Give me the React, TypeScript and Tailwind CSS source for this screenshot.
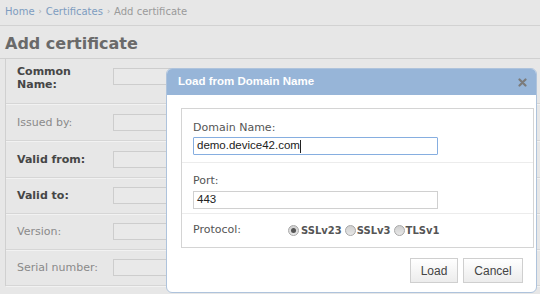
import React from "react";

const Radio = ({ checked }: { checked?: boolean }) => (
  <span className="inline-flex w-[11px] h-[11px] rounded-full border border-[#a8a8a8] bg-gradient-to-b from-[#cfcfcf] to-[#e8e8e8] items-center justify-center shrink-0">
    {checked && <span className="w-[5px] h-[5px] rounded-full bg-[#555]" />}
  </span>
);

const Row = ({
  label,
  bold,
  h,
  top,
}: {
  label: React.ReactNode;
  bold?: boolean;
  h: string;
  top?: boolean;
}) => (
  <div
    className={`flex ${h} border-b border-[#d6d6d6] shadow-[0_1px_0_#f2f2f2] ${top ? "items-start pt-[6px]" : "items-center"}`}
  >
    <div
      className={`w-[107px] pl-[11px] leading-[13px] ${bold ? "font-bold text-[#464646]" : "text-[#8a8a8a]"}`}
    >
      {label}
    </div>
    <div className={`w-[200px] h-[17px] border border-[#cdcdcd] bg-[#e9e9e9] ${top ? "mt-[3px]" : ""}`} />
  </div>
);

const arial = { fontFamily: '"Liberation Sans", Arial, sans-serif' };

export default function App() {
  return (
    <div
      className="relative w-[540px] h-[294px] overflow-hidden bg-[#e7e7e7] text-[11px]"
      style={{ fontFamily: '"DejaVu Sans", Verdana, sans-serif' }}
    >
      <div className="h-[26px] flex items-center px-[5px] border-b border-[#d2d2d2] text-[10px] pb-[2px]">
        <span className="text-[#7d9cc0]">Home</span>
        <span className="text-[#aaa] mx-[4px] text-[8px]">›</span>
        <span className="text-[#7d9cc0]">Certificates</span>
        <span className="text-[#aaa] mx-[4px] text-[8px]">›</span>
        <span className="text-[#9a9a9a]">Add certificate</span>
      </div>
      <div className="h-[33px] flex items-center px-[5px] pt-[3px] border-b border-[#d0d0d0] text-[16px] font-bold text-[#6a6a6a]">
        Add certificate
      </div>
      <div className="ml-[5px] border-l border-[#d0d0d0]">
        <Row label={<>Common<br />Name:</>} bold h="h-[45px]" top />
        <Row label="Issued by:" h="h-[37px]" />
        <Row label="Valid from:" bold h="h-[37px]" />
        <Row label="Valid to:" bold h="h-[36px]" />
        <Row label="Version:" h="h-[36px]" />
        <Row label="Serial number:" h="h-[36px]" />
      </div>

      <div className="absolute left-[166px] top-[68px] w-[371px] h-[225px] rounded-[6px] bg-white border border-[#aec3dc] flex flex-col overflow-hidden">
        <div className="h-[26px] shrink-0 bg-[#97b5d8] flex items-center justify-between pl-[11px] pr-[9px]">
          <span className="text-white font-bold text-[11.5px]" style={arial}>
            Load from Domain Name
          </span>
          <svg width="9" height="9" viewBox="0 0 9 9">
            <path d="M1.5 1.5 L7.5 7.5 M7.5 1.5 L1.5 7.5" stroke="#7b7b7b" strokeWidth="2.2" strokeLinecap="round" />
          </svg>
        </div>
        <div className="mt-[13px] ml-[14px] mr-[2px] border border-[#d4d4d4] flex flex-col text-[#555]">
          <div className="h-[54px] border-b border-[#ececec] pl-[11px] pt-[12px] flex flex-col">
            <span className="leading-[13px]">Domain Name:</span>
            <div
              className="mt-[3px] w-[245px] h-[18px] border border-[#86aee0] flex items-center pl-[3px] text-[#222] text-[11.5px] rounded-[1px]"
              style={arial}
            >
              demo.device42.com<span className="w-px h-[13px] bg-[#222]" />
            </div>
          </div>
          <div className="h-[51px] border-b border-[#ececec] pl-[11px] pt-[11px] flex flex-col">
            <span className="leading-[13px]">Port:</span>
            <div
              className="mt-[4px] w-[245px] h-[18px] border border-[#d0d0d0] flex items-center pl-[3px] text-[#222] text-[11.5px]"
              style={arial}
            >
              443
            </div>
          </div>
          <div className="h-[33px] pl-[11px] flex items-center">
            <span className="w-[95px]">Protocol:</span>
            <div className="flex items-center text-[#555] font-bold text-[10px]">
              <Radio checked />
              <span className="ml-[2px] mr-[3px]">SSLv23</span>
              <Radio />
              <span className="ml-[1px] mr-[3px]">SSLv3</span>
              <Radio />
              <span className="ml-[1px]">TLSv1</span>
            </div>
          </div>
        </div>
        <div className="flex justify-end gap-[5px] mt-[10px] pr-[13px]">
          <div
            className="w-[48px] h-[25px] border border-[#cfcfcf] bg-gradient-to-b from-white to-[#ececec] flex items-center justify-center text-[#444] text-[12px]"
            style={arial}
          >
            Load
          </div>
          <div
            className="w-[60px] h-[25px] border border-[#cfcfcf] bg-gradient-to-b from-white to-[#ececec] flex items-center justify-center text-[#444] text-[12px]"
            style={arial}
          >
            Cancel
          </div>
        </div>
      </div>
    </div>
  );
}
